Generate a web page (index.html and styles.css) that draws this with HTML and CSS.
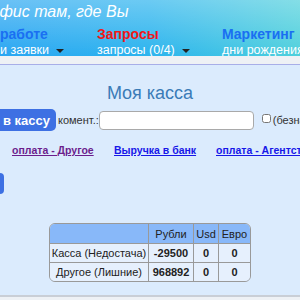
FILE: index.html
```html
<!DOCTYPE html>
<html>
<head>
    <title>Моя касса</title>
    <link rel="stylesheet" href="styles.css">
</head>
<body>
    <div class="header">
        <div class="slogan">Офис там, где Вы</div>
        <div class="menu">
            <div class="menu-item item-work">
                <div class="menu-title blue">работе</div>
                <div class="menu-sub">и заявки <span class="caret"></span></div>
            </div>
            <div class="menu-item item-req">
                <div class="menu-title red">Запросы</div>
                <div class="menu-sub">запросы (0/4) <span class="caret"></span></div>
            </div>
            <div class="menu-item item-mark">
                <div class="menu-title blue">Маркетинг</div>
                <div class="menu-sub">дни рождения</div>
            </div>
        </div>
    </div>

    <div class="content">
        <h1>Моя касса</h1>

        <form class="cash-form">
            <button type="button" class="btn">в кассу</button>
            <label for="comment">комент.:</label>
            <input type="text" id="comment" name="comment">
            <input type="checkbox" id="cashless" name="cashless">
            <label for="cashless" class="cb-label">(безнал)</label>
        </form>

        <div class="links">
            <a href="#" class="visited">оплата - Другое</a>
            <a href="#">Выручка в банк</a>
            <a href="#">оплата - Агентству</a>
        </div>

        <div class="stub"></div>

        <div class="table-wrap">
            <table class="cash-table">
                <tr>
                    <th class="name"></th>
                    <th class="rub">Рубли</th>
                    <th class="usd">Usd</th>
                    <th class="eur">Евро</th>
                </tr>
                <tr>
                    <td>Касса (Недостача)</td>
                    <td class="num">-29500</td>
                    <td class="num">0</td>
                    <td class="num">0</td>
                </tr>
                <tr>
                    <td>Другое (Лишние)</td>
                    <td class="num">968892</td>
                    <td class="num">0</td>
                    <td class="num">0</td>
                </tr>
            </table>
        </div>
    </div>

    <div class="footer"></div>
</body>
</html>
```

FILE: styles.css
```css
body {
    margin: 0;
    font-family: 'Liberation Sans', Arial, sans-serif;
    background-color: #eef1f5;
    overflow: hidden;
    width: 300px;
}

.header {
    height: 56px;
    background: linear-gradient(to bottom, rgba(255, 255, 255, 0.3), rgba(255, 255, 255, 0)),
                linear-gradient(to right, #2aa6f2 0%, #2cb4ee 50%, #4fd0dc 100%);
    overflow: hidden;
}

.slogan {
    color: #fff;
    font-style: italic;
    font-size: 16px;
    margin-left: -13px;
    padding-top: 3px;
    height: 22px;
}

.menu {
    display: flex;
    white-space: nowrap;
}

.menu-item {
    flex: none;
}

.item-work {
    width: 97px;
}

.item-req {
    width: 125px;
}

.menu-title {
    font-size: 14px;
    font-weight: bold;
    height: 16px;
    line-height: 16px;
    margin-top: 1px;
}

.menu-title.blue {
    color: #1a6ff2;
}

.menu-title.red {
    color: #f01818;
}

.menu-sub {
    color: #fff;
    font-size: 12.5px;
    line-height: 16px;
}

.caret {
    display: inline-block;
    width: 0;
    height: 0;
    border-left: 4px solid transparent;
    border-right: 4px solid transparent;
    border-top: 4px solid #222;
    margin-left: 4px;
    vertical-align: middle;
}

.content {
    margin-top: 8px;
    border-top: 1px solid #a8aee8;
    background-color: #dbebfd;
    height: 229px;
    padding-top: 1px;
}

h1 {
    margin: 17px 0 0;
    font-size: 18px;
    font-weight: normal;
    color: #3a7bb7;
    text-align: center;
    line-height: 21px;
}

.cash-form {
    display: flex;
    align-items: center;
    margin-top: 5px;
    height: 22px;
    white-space: nowrap;
}

.btn {
    background-color: #3d70e3;
    color: #fff;
    border: none;
    border-radius: 0 5px 5px 0;
    font-family: inherit;
    font-size: 13px;
    font-weight: bold;
    height: 22px;
    width: 56px;
    padding: 0 0 0 3px;
    text-align: left;
    flex: none;
}

.cash-form label {
    font-size: 11px;
    color: #333;
    margin-left: 2px;
}

.cash-form input[type="text"] {
    width: 155px;
    height: 19px;
    box-sizing: border-box;
    border: 1px solid #a9a9a9;
    border-radius: 4px;
    margin: 0;
    background: #fff;
    flex: none;
}

.cash-form input[type="checkbox"] {
    width: 9px;
    height: 9px;
    margin: 0 0 4px 8px;
    flex: none;
}

.cash-form .cb-label {
    margin-left: 2px;
}

.links {
    display: flex;
    margin-top: 13px;
    padding-left: 12px;
    white-space: nowrap;
}

.links a {
    width: 102px;
    flex: none;
    font-size: 10.5px;
    font-weight: bold;
    color: #1717e8;
}

.links a.visited {
    color: #6b1d8c;
}

.stub {
    width: 4px;
    height: 21px;
    background-color: #3d70e3;
    border-radius: 0 4px 4px 0;
    margin-top: 17px;
}

.table-wrap {
    margin: 29px 0 0 49px;
    width: 200px;
    border: 1px solid #999;
    border-radius: 6px;
    overflow: hidden;
}

.cash-table {
    border-collapse: collapse;
    width: 100%;
    font-size: 11px;
    color: #222;
}

.cash-table th {
    background-color: #88b8f9;
    font-weight: normal;
    height: 19px;
    padding: 0;
}

.cash-table td {
    background-color: #e6f0fd;
    height: 18px;
    padding: 0;
    text-align: center;
    border-top: 1px solid #999;
}

.cash-table th + th,
.cash-table td + td {
    border-left: 1px solid #999;
}

.cash-table .name {
    width: 98px;
}

.cash-table .rub {
    width: 44px;
}

.cash-table .usd {
    width: 24px;
}

.cash-table td.num {
    font-weight: bold;
}

.footer {
    border-top: 2px solid #c9ced6;
    height: 10px;
}
```
